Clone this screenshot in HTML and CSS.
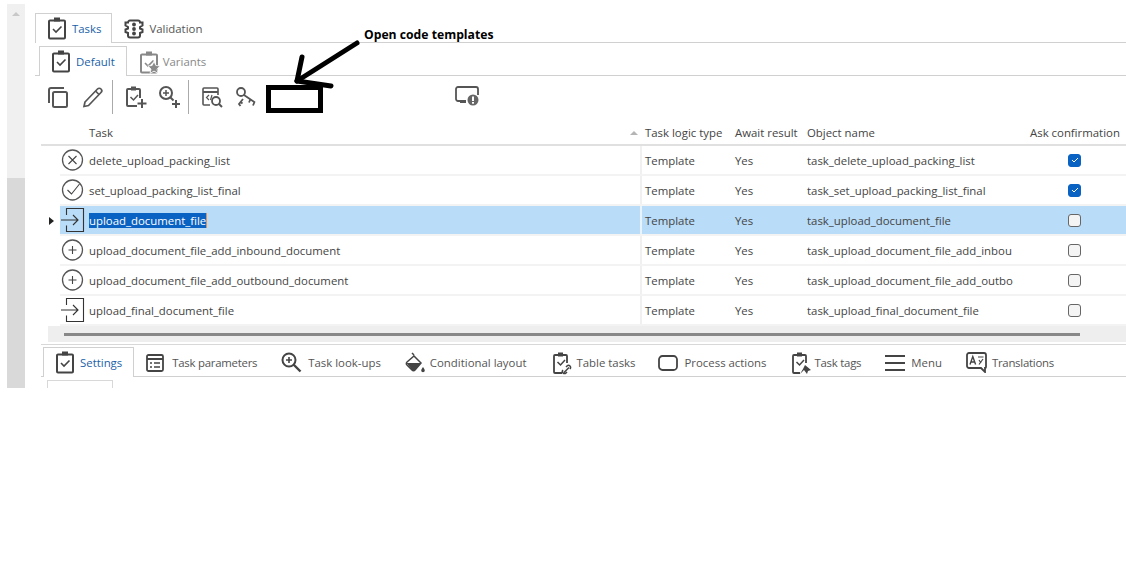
FILE: index.html
```html
<!DOCTYPE html>
<html lang="en">
<head>
<meta charset="utf-8">
<title>Tasks</title>
<link rel="stylesheet" href="styles.css">
</head>
<body>
<svg class="defs" width="0" height="0">
  <defs>
    <symbol id="clip" viewBox="0 0 20 24"><path d="M3 4.500h14a1 1 0 0 1 1 1V21.500a1 1 0 0 1-1 1H3a1 1 0 0 1-1-1V5.500a1 1 0 0 1 1-1z" fill="none" stroke="currentColor" stroke-width="2"/><rect x="7" y="1.500" width="6" height="4" fill="currentColor"/><path d="M6 13l3 3 5.500-5.500" fill="none" stroke="currentColor" stroke-width="1.600"/></symbol>
  </defs>
</svg>
<div class="app">
  <div class="scrollbar">
    <div class="scroll-track"><span class="scroll-up"></span></div>
    <div class="scroll-thumb"></div>
  </div>
  <div class="main">
    <div class="tabs tabs-top">
      <div class="tab active"><svg class="ico" width="20" height="24"><use href="#clip"/></svg><span class="tab-label link">Tasks</span></div>
      <div class="tab"><svg class="ico" width="20" height="20" viewBox="0 0 20 20" fill="none" stroke="#444" stroke-width="2"><path d="M6 1.500h8a2 2 0 0 1 2 2h2.500v3L16 8v1.500l2.500 1V13L16 14v2.500a2 2 0 0 1-2 2H6a2 2 0 0 1-2-2V14l-2.500-1v-2.500L4 9.500V8L1.500 6.500v-3H4a2 2 0 0 1 2-2z"/><circle cx="10" cy="5.500" r="1.900" fill="#444" stroke="none"/><circle cx="10" cy="10" r="1.900" fill="#444" stroke="none"/><circle cx="10" cy="14.500" r="1.900" fill="#444" stroke="none"/></svg><span class="tab-label">Validation</span></div>
    </div>
    <div class="tabs tabs-sub">
      <div class="tab active"><svg class="ico" width="20" height="24"><use href="#clip"/></svg><span class="tab-label link">Default</span></div>
      <div class="tab muted"><svg class="ico star-ico" width="20" height="24" viewBox="0 0 20 24"><use href="#clip" width="20" height="24"/><path d="M15 11.500l1.900 4 4.300.5-3.200 3 .9 4.300-3.900-2.200-3.900 2.200.9-4.300-3.200-3 4.300-.5z" fill="#8a8a8a" stroke="#fff" stroke-width=".8"/></svg><span class="tab-label">Variants</span></div>
    </div>
    <div class="toolbar">
      <div class="tool-group first">
        <svg class="tool" width="22" height="22" viewBox="0 0 22 22" fill="none" stroke="#555" stroke-width="2"><rect x="6" y="6" width="14" height="15" rx="1.500"/><path d="M2 17V4a2 2 0 0 1 2-2h13"/></svg>
        <svg class="tool" width="22" height="22" viewBox="0 0 22 22" fill="none" stroke="#555" stroke-width="1.700"><path d="M3 16L15.500 3a2 2 0 0 1 3.500 3.500L6.500 19.500l-4.500 1z"/><path d="M13.500 5l3.500 3.500"/></svg>
      </div>
      <div class="tool-group second">
        <svg class="tool" width="22" height="24" viewBox="0 0 22 24" fill="none" stroke="#555" stroke-width="2"><path d="M12 21H3a1 1 0 0 1-1-1V5a1 1 0 0 1 1-1h11a1 1 0 0 1 1 1v8"/><rect x="6" y="1.500" width="5" height="4" fill="#555" stroke="none"/><path d="M5.500 12l3 3 4.500-5" stroke-width="1.500"/><path d="M17 14v9M12.500 18.500h9"/></svg>
        <svg class="tool" width="24" height="24" viewBox="0 0 24 24" fill="none" stroke="#555"><circle cx="8" cy="8" r="6" stroke-width="2"/><path d="M5 8h6M8 5v6" stroke-width="1.500"/><path d="M12.500 12.500l3 3" stroke-width="2"/><path d="M18 15v8M14 19h8" stroke-width="2"/></svg>
      </div>
      <div class="tool-group third">
        <svg class="tool" width="23" height="22" viewBox="0 0 23 22" fill="none" stroke="#555" stroke-width="1.600"><path d="M9 19H3a1 1 0 0 1-1-1V3a1 1 0 0 1 1-1h13a1 1 0 0 1 1 1v6"/><path d="M2 6h15" stroke-width="2"/><path d="M8 9l-2.500 2.500L8 14M11 9l-1.500 5" stroke-width="1.200"/><circle cx="15" cy="15" r="4" stroke-width="1.800"/><path d="M18 18l3 3" stroke-width="2"/></svg>
        <svg class="tool" width="22" height="22" viewBox="0 0 22 22" fill="none" stroke="#555" stroke-width="1.800"><circle cx="6" cy="6" r="4"/><path d="M9 9l11 7.500M15.500 13L14 16.500M19.500 16l-1.500 3.500"/><path d="M8 13l-4 5 1.500 2M5.500 16l2 1.500"/></svg>
      </div>
      <svg class="tool tool-alert" width="26" height="22" viewBox="0 0 26 22" fill="none"><path d="M10 15H3a2 2 0 0 1-2-2V3a2 2 0 0 1 2-2h18a2 2 0 0 1 2 2v6" stroke="#555" stroke-width="1.800"/><rect x="5" y="14" width="6" height="3" fill="#555"/><circle cx="18" cy="14" r="5.500" fill="#666"/><rect x="17" y="10.500" width="2" height="4.500" fill="#fff"/><rect x="17" y="16" width="2" height="1.700" fill="#fff"/></svg>
    </div>
    <div class="grid">
      <div class="row head">
        <div class="c-task">Task<span class="sort"></span></div>
        <div class="c-type">Task logic type</div>
        <div class="c-await">Await result</div>
        <div class="c-name">Object name</div>
        <div class="c-ask">Ask confirmation</div>
      </div>
      <div class="row">
        <div class="c-task"><svg class="ri" width="24" height="24" viewBox="0 0 24 24" fill="none" stroke="#444"><circle cx="11.500" cy="12" r="10" stroke="#555" stroke-width="1.300"/><path d="M7.500 8l8 8M15.500 8l-8 8" stroke-width="1.100"/></svg><span>delete_upload_packing_list</span></div>
        <div class="c-type">Template</div><div class="c-await">Yes</div><div class="c-name">task_delete_upload_packing_list</div>
        <div class="c-ask"><span class="check on"><svg width="10" height="10" viewBox="0 0 10 10" fill="none" stroke="#fff"><path d="M2 5l2 2 4-4"/></svg></span></div>
      </div>
      <div class="row">
        <div class="c-task"><svg class="ri" width="24" height="24" viewBox="0 0 24 24" fill="none" stroke="#444"><circle cx="11.500" cy="12" r="10" stroke="#555" stroke-width="1.300"/><path d="M6.500 12l4 4 8-10" stroke-width="1.100"/></svg><span>set_upload_packing_list_final</span></div>
        <div class="c-type">Template</div><div class="c-await">Yes</div><div class="c-name">task_set_upload_packing_list_final</div>
        <div class="c-ask"><span class="check on"><svg width="10" height="10" viewBox="0 0 10 10" fill="none" stroke="#fff"><path d="M2 5l2 2 4-4"/></svg></span></div>
      </div>
      <div class="row selected">
        <span class="pointer"></span>
        <div class="c-task"><svg class="ri" width="24" height="24" viewBox="0 0 24 24" fill="none" stroke="#333" stroke-width="1.100"><path d="M5.500 7V.5h17v23h-17v-6"/><path d="M0 12h17M12 7l5 5-5 5"/></svg><span class="sel-text">upload_document_file</span></div>
        <div class="c-type">Template</div><div class="c-await">Yes</div><div class="c-name">task_upload_document_file</div>
        <div class="c-ask"><span class="check"></span></div>
      </div>
      <div class="row">
        <div class="c-task"><svg class="ri" width="24" height="24" viewBox="0 0 24 24" fill="none" stroke="#444"><circle cx="11.500" cy="12" r="10" stroke="#555" stroke-width="1.300"/><path d="M7.500 12h8M11.500 8v8" stroke-width="1.100"/></svg><span>upload_document_file_add_inbound_document</span></div>
        <div class="c-type">Template</div><div class="c-await">Yes</div><div class="c-name">task_upload_document_file_add_inbou</div>
        <div class="c-ask"><span class="check"></span></div>
      </div>
      <div class="row">
        <div class="c-task"><svg class="ri" width="24" height="24" viewBox="0 0 24 24" fill="none" stroke="#444"><circle cx="11.500" cy="12" r="10" stroke="#555" stroke-width="1.300"/><path d="M7.500 12h8M11.500 8v8" stroke-width="1.100"/></svg><span>upload_document_file_add_outbound_document</span></div>
        <div class="c-type">Template</div><div class="c-await">Yes</div><div class="c-name">task_upload_document_file_add_outbo</div>
        <div class="c-ask"><span class="check"></span></div>
      </div>
      <div class="row">
        <div class="c-task"><svg class="ri" width="24" height="24" viewBox="0 0 24 24" fill="none" stroke="#333" stroke-width="1.100"><path d="M5.500 7V.5h17v23h-17v-6"/><path d="M0 12h17M12 7l5 5-5 5"/></svg><span>upload_final_document_file</span></div>
        <div class="c-type">Template</div><div class="c-await">Yes</div><div class="c-name">task_upload_final_document_file</div>
        <div class="c-ask"><span class="check"></span></div>
      </div>
      <div class="hscroll"><div class="hthumb"></div></div>
    </div>
    <div class="tabs tabs-bottom">
      <div class="tab active"><svg class="ico" width="20" height="24"><use href="#clip"/></svg><span class="tab-label link">Settings</span></div>
      <div class="tab gap-8"><svg class="ico" width="18" height="18" viewBox="0 0 18 18" fill="none" stroke="#444" stroke-width="1.800"><rect x="1" y="1" width="16" height="16" rx="1.500"/><path d="M1 5h16" stroke-width="2"/><path d="M4 9h2M8 9h6M4 13h2M8 13h6" stroke-width="1.500"/></svg><span class="tab-label narrow">Task parameters</span></div>
      <div class="tab gap-6"><svg class="ico" width="21" height="21" viewBox="0 0 21 21" fill="none" stroke="#444"><circle cx="8" cy="8" r="6.500" stroke-width="2"/><path d="M5 8h6M8 5v6" stroke-width="1.600"/><path d="M12.500 12.500l7 7" stroke-width="2.400"/></svg><span class="tab-label">Task look-ups</span></div>
      <div class="tab"><svg class="ico" width="20" height="22" viewBox="0 0 20 22"><path d="M7 1l2 2M2 10l7-6 7 7-6 7a2 2 0 0 1-3 0l-5-5a2 2 0 0 1 0-3z" fill="none" stroke="#444" stroke-width="1.500"/><path d="M1.500 11h14.500l-6 7a2 2 0 0 1-3 0z" fill="#444"/><path d="M18 15c1 1.500 1.800 2.500 1.800 3.500a1.800 1.800 0 0 1-3.600 0c0-1 .8-2 1.800-3.500z" fill="#444"/></svg><span class="tab-label">Conditional layout</span></div>
      <div class="tab gap-4 nudge"><svg class="ico" width="20" height="24" viewBox="0 0 20 24" fill="none" stroke="#444"><path d="M10 22H3a1 1 0 0 1-1-1V5a1 1 0 0 1 1-1h11a1 1 0 0 1 1 1v7" stroke-width="1.800"/><rect x="6" y="1.500" width="5" height="4" fill="#444" stroke="none"/><path d="M5.500 11l3 3 4.500-5" stroke-width="1.500"/><path d="M12 21.500l5-5M11 19a2 2 0 0 0 3 3l1-1M18 18a2 2 0 0 0-3-3l-1 1" stroke-width="1.500"/></svg><span class="tab-label">Table tasks</span></div>
      <div class="tab gap-7"><svg class="ico" width="20" height="16" viewBox="0 0 20 16" fill="none" stroke="#444" stroke-width="1.800"><rect x="1" y="1" width="18" height="14" rx="3.500"/></svg><span class="tab-label">Process actions</span></div>
      <div class="tab gap-4"><svg class="ico" width="20" height="24" viewBox="0 0 20 24" fill="none" stroke="#444"><path d="M9 22H3a1 1 0 0 1-1-1V5a1 1 0 0 1 1-1h11a1 1 0 0 1 1 1v7" stroke-width="1.800"/><rect x="6" y="1.500" width="5" height="4" fill="#444" stroke="none"/><path d="M5.500 11l3 3 4.500-5" stroke-width="1.500"/><path d="M14 14l6 5-3 1-1 3-3-4-4 4 3-5z" fill="#444" stroke="none"/></svg><span class="tab-label narrow">Task tags</span></div>
      <div class="tab gap-6"><svg class="ico" width="20" height="16" viewBox="0 0 20 16" fill="none" stroke="#444" stroke-width="2"><path d="M0 1h20M0 8h20M0 15h20"/></svg><span class="tab-label">Menu</span></div>
      <div class="tab gap-5"><svg class="ico" width="21" height="21" viewBox="0 0 21 21" fill="none" stroke="#444" stroke-width="1.800"><path d="M3 1h15a2 2 0 0 1 2 2v12a1 1 0 0 1-1 1v4l-4-4H3a2 2 0 0 1-2-2V3a2 2 0 0 1 2-2z"/><path d="M4 12.500l2.800-8 2.800 8M5 10h3.600" stroke-width="1.400"/><path d="M12 5h5.500M13 8l2 3M17 7l-4 5.500" stroke-width="1.200"/></svg><span class="tab-label narrow">Translations</span></div>
    </div>
    <div class="stub"></div>
  </div>
</div>
<div class="note">Open code templates</div>
<svg class="annotation" width="80" height="60" viewBox="0 0 80 60" fill="none" stroke="#000" stroke-linecap="round"><path d="M67 5L7 43" stroke-width="5"/><path d="M7 43L12 19M7 43L41 48" stroke-width="5"/></svg>
<div class="marker"></div>
</body>
</html>
```

FILE: styles.css
```css
* { box-sizing: border-box; }
html, body { margin: 0; padding: 0; background: #fff; }
body {
  font-family: "Open Sans", "Noto Sans", sans-serif;
  font-size: 11.4px;
  color: #444;
  width: 1126px;
  height: 584px;
  overflow: hidden;
  position: relative;
}
.defs { position: absolute; }
.app { display: flex; height: 388px; padding-left: 7px; }
.scrollbar { width: 18px; display: flex; flex-direction: column; padding-top: 4px; }
.scroll-track { height: 174px; background: #f0f0f0; display: flex; justify-content: center; padding-top: 8px; }
.scroll-up { width: 0; height: 0; border: 4px solid transparent; border-top: 0; border-bottom: 4px solid #c8c8c8; }
.scroll-thumb { flex: 1; background: #d9d9d9; }
.main { flex: 1; min-width: 0; padding-top: 13px; padding-left: 10px; }
.tabs { display: flex; border-bottom: 1px solid #d0d0d0; align-items: flex-end; }
.tab { display: flex; align-items: center; gap: 5px; border: 1px solid transparent; border-bottom: 0; padding: 0 11px; height: 30px; margin-bottom: -1px; }
.tab.active { border-color: #d0d0d0; background: #fff; padding-bottom: 1px; }
.tab-label { white-space: nowrap; color: #555; }
.tab-label.link { color: #1a5fa8; }
.tab-label.narrow { letter-spacing: -.25px; }
.muted { gap: 4px; }
.muted .tab-label { color: #888; }
.muted .ico { color: #888; }
.star-ico { overflow: visible; }
.ico { color: #444; flex: none; }
.gap-4 { gap: 4px; }
.gap-5 { gap: 5px; }
.gap-6 { gap: 6px; }
.gap-7 { gap: 7px; }
.gap-8 { gap: 8px; }
.nudge { margin-left: 2px; margin-right: -2px; }
.tabs-top { height: 30px; }
.tabs-top .active { padding-right: 10px; }
.tabs-sub { height: 33px; padding-left: 4px; }
.toolbar { display: flex; align-items: center; height: 42px; padding-left: 12px; }
.tool-group { display: flex; align-items: center; gap: 11px; margin-right: 12px; border-right: 1px solid #aaa; height: 34px; }
.tool-group.first { gap: 13px; padding-right: 8px; }
.tool-group.second { padding-right: 6px; }
.tool-group.third { border-right: 0; margin-right: 0; }
.tool-alert { margin-left: 198px; }
.grid { margin-left: 6px; }
.row { display: flex; align-items: center; height: 30px; position: relative; margin-left: 19px; border-bottom: 2px solid #f3f3f3; }
.row.head { height: 28px; margin-left: 0; padding-left: 19px; padding-top: 2px; border-bottom: 2px solid #e0e0e0; }
.c-task { width: 582px; padding-left: 1px; display: flex; align-items: center; gap: 4px; height: 100%; position: relative; border-right: 2px solid #f0f0f0; white-space: nowrap; }
.head .c-task { padding-left: 29px; border-right: 0; }
.c-type { width: 93px; padding-left: 3px; }
.c-await { width: 72px; }
.c-name { width: 223px; white-space: nowrap; overflow: hidden; }
.c-ask { flex: 1; white-space: nowrap; display: flex; justify-content: center; padding-right: 7px; }
.head .c-ask { justify-content: flex-start; padding-right: 0; }
.sort { position: absolute; right: 4px; top: 11px; width: 0; height: 0; border: 4px solid transparent; border-top: 0; border-bottom: 4px solid #b5b5b5; }
.selected { background: #b9dcf8; }
.selected .c-task { border-right-color: #e8f3fc; }
.sel-text { background: #0a62c2; color: #fff; border-right: 1px solid #d9925a; }
.pointer { position: absolute; left: -11px; top: 11px; width: 0; height: 0; border: 4.500px solid transparent; border-left: 5px solid #222; border-right: 0; }
.ri { flex: none; }
.check { width: 13px; height: 13px; border-radius: 3px; border: 1px solid #666; background: #f4f4f4; display: flex; align-items: center; justify-content: center; }
.check.on { background: #0a62c2; border-color: #0a62c2; }
.hscroll { height: 16px; background: #eeeeee; margin-left: 7px; padding: 7px 46px 0 16px; }
.hthumb { height: 3px; background: #888; }
.tabs-bottom { margin-top: 2px; margin-left: 6px; border-top: 1px solid #d8d8d8; height: 33px; padding-left: 2px; }
.stub { width: 66px; height: 8px; margin-left: 12px; margin-top: 3px; border: 1px solid #d8d8d8; border-bottom: 0; }
.note { position: absolute; left: 364px; top: 26px; font-weight: 700; font-size: 12.2px; color: #000; white-space: nowrap; }
.annotation { position: absolute; left: 290px; top: 38px; }
.marker { position: absolute; left: 266px; top: 85px; width: 57px; height: 28px; border: 5px solid #000; }
```
